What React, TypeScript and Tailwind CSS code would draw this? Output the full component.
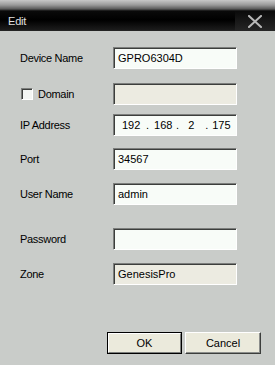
import React from "react";

const font = { fontFamily: '"Liberation Sans", Arial, sans-serif' };

function Field({ children, disabled }: { children?: React.ReactNode; disabled?: boolean }) {
  return (
    <div
      className={`w-[124px] h-[22px] flex items-center pl-[4px] text-[11px] text-black border border-t-[#7c7e7c] border-l-[#7c7e7c] border-b-white border-r-white shadow-[inset_1px_1px_0_#3c3e3c] ${
        disabled ? "bg-[#ecebe1]" : "bg-[#f8fcf8]"
      }`}
    >
      {children}
    </div>
  );
}

function Row({ label, children, mt }: { label: React.ReactNode; children: React.ReactNode; mt: string }) {
  return (
    <div className={`flex items-center ${mt}`}>
      <div className="w-[113px] pl-[20px] text-[11px] text-black tracking-[-0.3px]">{label}</div>
      {children}
    </div>
  );
}

export default function App() {
  return (
    <div className="w-[275px] h-[365px] flex flex-col bg-[#c9ccc9] overflow-hidden" style={font}>
      <div className="h-[31px] shrink-0 flex items-end bg-[linear-gradient(to_bottom,#c8c8c8_0px,#9a9a9a_5px,#5a5a5a_9px,#0a0a0a_11px,#000000_20px,#1c1c1c_30px,#2a2a2a_31px)]">
        <div className="flex-1 h-[20px] flex items-center justify-between">
          <span className="pl-[8px] text-[11px] text-[#e0e0e0] tracking-[-0.2px]">Edit</span>
          <div className="w-[40px] h-[20px] flex items-center justify-center bg-[linear-gradient(to_bottom,#0a0a0a,#262626)]">
            <svg width="14" height="13" viewBox="0 0 14 13">
              <path d="M1 1 L13 12 M13 1 L1 12" stroke="#b8b8b8" strokeWidth="2" strokeLinecap="square" />
            </svg>
          </div>
        </div>
      </div>
      <div className="flex-1 flex flex-col">
        <Row label="Device Name" mt="mt-[16px]">
          <Field>GPRO6304D</Field>
        </Row>
        <Row
          mt="mt-[14px]"
          label={
            <div className="flex items-center ml-[1px]">
              <div className="w-[12px] h-[12px] bg-[#f4f6f4] border border-t-[#7c7e7c] border-l-[#7c7e7c] border-b-white border-r-white shadow-[inset_1px_1px_0_#3c3e3c]" />
              <span className="ml-[5px]">Domain</span>
            </div>
          }
        >
          <Field disabled />
        </Row>
        <Row label="IP Address" mt="mt-[9px]">
          <Field>
            <div className="flex items-center text-[11px] pl-[4px]">
              <span className="w-[18px]">192</span>
              <span className="ml-[6px]">.</span>
              <span className="ml-[5px] w-[18px]">168</span>
              <span className="ml-[4px]">.</span>
              <span className="ml-[9px] w-[8px]">2</span>
              <span className="ml-[9px]">.</span>
              <span className="ml-[4px]">175</span>
            </div>
          </Field>
        </Row>
        <Row label="Port" mt="mt-[12px]">
          <Field>34567</Field>
        </Row>
        <Row label="User Name" mt="mt-[13px]">
          <Field>admin</Field>
        </Row>
        <Row label="Password" mt="mt-[23px]">
          <Field />
        </Row>
        <Row label="Zone" mt="mt-[13px]">
          <Field disabled>GenesisPro</Field>
        </Row>
        <div className="flex mt-[47px] pl-[107px] gap-[3px]">
          <div className="w-[75px] h-[22px] border border-black">
            <div className="w-full h-full flex items-center justify-center text-[11px] bg-[#ebeadc] border border-t-white border-l-white border-b-[#7c7e7c] border-r-[#7c7e7c]">
              OK
            </div>
          </div>
          <div className="w-[76px] h-[22px] flex items-center justify-center text-[11px] bg-[#ebeadc] border border-t-white border-l-white border-b-[#3c3e3c] border-r-[#3c3e3c] shadow-[inset_-1px_-1px_0_#8c8e8c]">
            Cancel
          </div>
        </div>
      </div>
    </div>
  );
}
